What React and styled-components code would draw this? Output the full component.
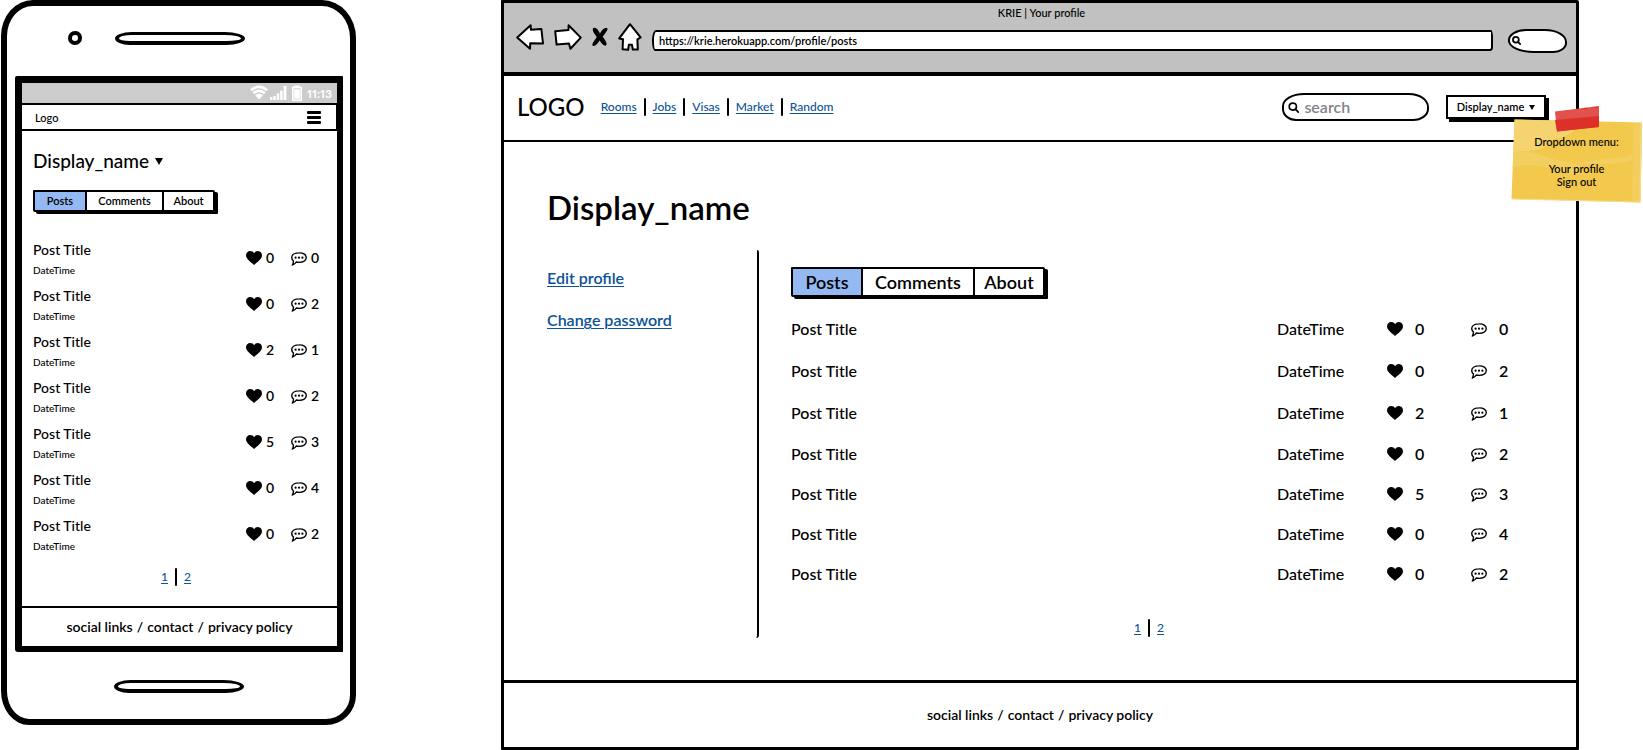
import React, { useState } from "react";
import styled, { createGlobalStyle, css } from "styled-components";

const INK = "#000";
const LINK = "#0b5299";

const GlobalStyle = createGlobalStyle`
  *, *::before, *::after { box-sizing: border-box; }
  body {
    margin: 0;
    background: #fff;
    color: ${INK};
    font-family: Lato, "Open Sans", sans-serif;
    font-weight: 500;
  }
  h1, h2, p, ul { margin: 0; padding: 0; font: inherit; }
  ul { list-style: none; }
  button, input { font: inherit; color: inherit; }
`;

const Page = styled.div`
  display: flex;
  align-items: flex-start;
  gap: 145px;
  padding: 0 64px 0 1px;
`;

const plainButton = css`
  border: 0;
  padding: 0;
  background: none;
  cursor: pointer;
`;

/* ---------- shared pieces ---------- */

const TabBar = styled.div`
  display: flex;
  width: max-content;
  height: ${(p) => (p.$small ? 22 : 30)}px;
  border: 2px solid ${INK};
  border-radius: 1px 2px 1px 2px;
  box-shadow: 3px 2px 0 ${INK};
`;

const Tab = styled.button`
  ${plainButton}
  width: ${(p) => p.$width}px;
  background: ${(p) => (p.$active ? "#94b9f2" : "#fff")};
  font-size: ${(p) => (p.$small ? 11 : 18)}px;
  line-height: 18px;
  font-weight: 600;
  & + & { border-left: 2px solid ${INK}; }
`;

const Pager = styled.nav`
  display: flex;
  justify-content: center;
  align-items: center;
  gap: 7px;
  height: 20px;
  padding-right: 3px;
`;

const Rule = styled.span`
  width: 2px;
  height: 18px;
  border-radius: 1px;
  background: ${INK};
`;

const TextLink = styled.a`
  color: ${LINK};
  font-size: ${(p) => (p.$large ? 16 : 12)}px;
  line-height: ${(p) => (p.$large ? 20 : 16)}px;
  font-weight: ${(p) => (p.$large ? 600 : 500)};
  text-decoration: underline;
  text-decoration-thickness: 1px;
  text-underline-offset: 2px;
`;

const FooterBar = styled.footer`
  display: flex;
  justify-content: center;
  align-items: center;
  gap: 4px;
  height: ${(p) => (p.$small ? 40 : 67)}px;
  border-top: ${(p) => (p.$small ? 2 : 3)}px solid ${INK};
  font-size: 14px;
  line-height: 20px;
  font-weight: 600;
`;

const FooterLink = styled.a`
  color: inherit;
  text-decoration: none;
`;

const Metric = styled.span`
  display: flex;
  align-items: center;
  gap: ${(p) => (p.$small ? 4 : 12)}px;
  font-size: ${(p) => (p.$small ? 14 : 16)}px;
  line-height: 20px;
  font-weight: 600;
`;

const Caret = styled.span`
  border: ${(p) => (p.$large ? 4 : 3)}px solid transparent;
  border-top: ${(p) => (p.$large ? 7 : 5)}px solid ${INK};
  border-bottom: 0;
`;

const HeartIcon = () => (
  <svg width="16" height="14" viewBox="0 0 16 14" aria-hidden="true">
    <path d="M8 14 C5.6 11.4 0.2 8.3 0 4.4 C0 1.6 2 0 4.1 0 C6 0 7.3 0.9 8.1 2.2 C9 0.8 10.4 0 12 0.1 C14.4 0.2 16 2 16 4.4 C15.9 8.4 10.5 11.2 8 14 Z" />
  </svg>
);

const BubbleIcon = () => (
  <svg width="16" height="16" viewBox="0 -2 16 16" fill="none" stroke={INK} strokeWidth="1.4" strokeLinejoin="round" aria-hidden="true">
    <path d="M8.2 0.9 C12.4 0.8 15.3 2.9 15.3 5.6 C15.2 8.6 12 10.4 8.3 10.4 C7.2 10.4 6.2 10.3 5.3 10 C4.4 11.6 2.9 12.7 1.3 13.1 C2 12.1 2.4 10.7 2.5 9 C1.3 8.2 0.7 7 0.7 5.6 C0.8 2.8 4 0.9 8.2 0.9 Z" />
    <g fill={INK} stroke="none">
      <circle cx="4.6" cy="5.7" r="1.1" />
      <circle cx="8" cy="5.7" r="1.1" />
      <circle cx="11.4" cy="5.7" r="1.1" />
    </g>
  </svg>
);

const SearchIcon = ({ size, weight }) => (
  <svg width={size} height={size} viewBox="0 0 12 12" fill="none" stroke={INK} strokeWidth={weight} strokeLinecap="round" aria-hidden="true">
    <path d="M5 1.3 C7.4 1.2 8.9 2.7 8.9 4.9 C8.9 7.1 7.3 8.7 5.1 8.7 C2.8 8.7 1.3 7.2 1.3 5 C1.3 2.7 2.8 1.4 5 1.3 Z M7.9 7.8 L10.8 10.8" />
  </svg>
);

/* ---------- phone ---------- */

const Phone = styled.section`
  flex: none;
  width: 355px;
  border: 6px solid ${INK};
  border-radius: 32px 34px 30px 28px / 36px 38px 30px 34px;
  padding: 25px 7px 26px 8px;
`;

const PhoneTop = styled.div`
  display: flex;
  align-items: center;
  gap: 33px;
  padding-left: 53px;
  margin-bottom: 31px;
`;

const Camera = styled.span`
  width: 14px;
  height: 14px;
  border: 4px solid ${INK};
  border-radius: 50% 46% 50% 48%;
`;

const Speaker = styled.span`
  display: block;
  width: 130px;
  height: 13px;
  border: 4px solid ${INK};
  border-top-width: 3px;
  border-radius: 18px 22px 20px 16px / 7px;
`;

const PhoneBottom = styled.div`
  display: flex;
  justify-content: center;
  padding-top: 28px;
`;

const Screen = styled.div`
  border: 7px solid ${INK};
  border-right-width: 6px;
  border-bottom-width: 6px;
  border-radius: 2px 1px 0 3px;
`;

const StatusBar = styled.div`
  display: flex;
  justify-content: flex-end;
  align-items: center;
  gap: 5px;
  height: 20px;
  padding-right: 5px;
  background: #ccc;
  color: #fff;
  font-size: 12px;
  font-weight: 700;
  font-variant-numeric: proportional-nums;
`;

const PhoneHeader = styled.header`
  display: flex;
  justify-content: space-between;
  align-items: center;
  height: 28px;
  padding: 0 15px 0 13px;
  border-top: 2px solid ${INK};
  border-bottom: 2px solid ${INK};
  border-right: 1px solid ${INK};
  font-size: 11px;
`;

const MenuButton = styled.button`
  ${plainButton}
  display: flex;
  flex-direction: column;
  gap: 2px;
  width: 14px;
  span { height: 3px; border-radius: 1px; background: ${INK}; }
`;

const PhoneMain = styled.main`
  padding: 18px 15px 19px 11px;
`;

const NameButton = styled.button`
  ${plainButton}
  display: flex;
  align-items: center;
  gap: 6px;
  margin-bottom: 17px;
  font-size: 19px;
  line-height: 24px;
`;

const PhoneList = styled.ul`
  margin: 27px 0 6px;
`;

const PhoneRow = styled.li`
  display: grid;
  grid-template-columns: 1fr 45px 31px;
  align-items: start;
  height: 46px;
  ${Metric} { height: 38px; }
`;

const PhoneTitle = styled.p`
  font-size: 14px;
  line-height: 22px;
`;

const PhoneDate = styled.p`
  font-size: 10px;
  line-height: 18px;
`;

/* ---------- browser ---------- */

const Browser = styled.section`
  position: relative;
  flex: 1;
  min-width: 0;
  border: 3px solid ${INK};
  border-radius: 1px 2px 1px 1px;
`;

const Chrome = styled.div`
  height: 73px;
  padding: 2px 9px 0 12px;
  border-bottom: 4px solid ${INK};
  background: #c1c1c1;
`;

const WindowTitle = styled.p`
  font-size: 11px;
  line-height: 16px;
  text-align: center;
`;

const ChromeRow = styled.div`
  display: flex;
  align-items: center;
  gap: 10px;
  height: 32px;
`;

const ChromeButton = styled.button`
  ${plainButton}
  display: flex;
`;

const ChromeFields = styled.div`
  display: flex;
  align-items: center;
  flex: 1;
  gap: 15px;
  padding-top: 7px;
`;

const AddressBar = styled.input`
  flex: 1;
  min-width: 0;
  height: 21px;
  padding: 0 5px;
  border: 2px solid ${INK};
  border-radius: 4px 2px 3px 3px / 10px 8px 4px 10px;
  background: #fff;
  font-size: 11px;
  line-height: 16px;
  font-weight: 600;
`;

const ChromeSearch = styled.label`
  display: flex;
  align-items: center;
  width: 59px;
  height: 24px;
  padding-left: 2px;
  border: 2px solid ${INK};
  border-radius: 18px 22px 14px 26px / 11px 13px 10px 12px;
  background: #fff;
`;

const BareInput = styled.input`
  width: 100%;
  min-width: 0;
  padding: 0;
  border: 0;
  outline: 0;
  background: none;
  font-size: 16px;
  line-height: 20px;
  font-weight: 600;
  &::placeholder { color: #83838b; opacity: 1; }
`;

const SiteHeader = styled.header`
  display: flex;
  align-items: center;
  height: 66px;
  padding: 0 30px 2px 13px;
  border-bottom: 2px solid ${INK};
`;

const Logo = styled.a`
  margin-right: 16px;
  color: inherit;
  font-size: 24px;
  line-height: 28px;
  text-decoration: none;
`;

const SiteNav = styled.nav`
  display: flex;
  align-items: center;
  gap: 7px;
`;

const SearchBox = styled.label`
  display: flex;
  align-items: center;
  gap: 5px;
  width: 147px;
  height: 28px;
  margin: 0 17px 0 auto;
  padding: 0 8px 0 4px;
  border: 2px solid ${INK};
  border-radius: 22px 20px 16px 14px / 13px 14px 12px 12px;
`;

const AccountButton = styled.button`
  ${plainButton}
  display: flex;
  justify-content: center;
  align-items: center;
  gap: 5px;
  width: 100px;
  height: 24px;
  border: 2px solid ${INK};
  box-shadow: 3px 3px 0 ${INK};
  font-size: 11px;
  line-height: 16px;
  font-weight: 600;
`;

const SiteMain = styled.main`
  padding: 47px 66px 42px 43px;
`;

const PageTitle = styled.h1`
  margin-bottom: 25px;
  font-size: 33px;
  line-height: 36px;
  font-weight: 600;
`;

const Columns = styled.div`
  display: grid;
  grid-template-columns: 212px 1fr;
  gap: 32px;
`;

const Sidebar = styled.nav`
  display: flex;
  flex-direction: column;
  align-items: flex-start;
  gap: 22px;
  padding-top: 18px;
  border-right: 2px solid ${INK};
  border-radius: 0 2px 3px 0;
`;

const Posts = styled.div`
  padding-top: 17px;
`;

const PostList = styled.ul`
  margin: 11px 0 24px;
`;

const PostRow = styled.li`
  display: grid;
  grid-template-columns: 1fr 110px 84px 39px;
  align-items: center;
  height: 40px;
  font-size: 16px;
  line-height: 20px;
  &:nth-child(-n + 3) { height: 42px; }
`;

const Note = styled.aside`
  position: absolute;
  top: 103px;
  right: -66px;
  width: 131px;
  height: 97px;
  padding-top: 29px;
  font-size: 11px;
  line-height: 13px;
  text-align: center;
  svg { position: absolute; top: 0; left: 0; }
  p { position: relative; }
  p + p { margin-top: 14px; }
`;

const NotePaper = () => (
  <svg width="131" height="97" viewBox="0 0 131 97" aria-hidden="true">
    <path d="M3.5 13.5 L131 16.5 L129.5 96.5 L0.5 93 Z" fill="#f2c94c" />
    <path d="M3.5 13.5 L72 15 C66 24 58 30 44 33 C34 36 38 42 24 44 C16 46 10 44 2.4 47 Z" fill="#f4d370" />
    <path d="M2.4 47 C16 42 30 50 46 54 C60 55 76 62 74 67 C56 72 42 62 28 60 C18 59 10 58 1.8 62 Z" fill="#f3cf60" />
    <path d="M66 57 C90 52 108 54 121 48 L121 54 C106 58 88 60 66 57 Z" fill="#f3cf60" />
    <path d="M122 17 L131 17 L129.5 96 L121 94 Z" fill="#f3ce5c" />
    <path d="M130 17 L129 96 L1 93" fill="none" stroke="#f7dd8c" />
    <path d="M44 5.5 L88 0 L88 21 L46 25.5 Z" fill="#e0524b" />
    <path d="M44 14 L88 10 L88 21 L46 25.5 Z" fill="#dd3028" />
    <path d="M70 3 L77 1.6 L75 3.6 Z M81 1.4 L87 0.8 L86 2.2 Z" fill="#d7332c" />
  </svg>
);

const ArrowIcon = ({ flip }) => (
  <svg width="28" height="26" viewBox="0 0 28 26" fill="#fff" stroke={INK} strokeWidth="2" strokeLinejoin="round" aria-hidden="true">
    {flip ? (
      <path d="M1.2 7.2 L14.5 6 L14.6 1.2 L26.8 13.6 L16.4 24.8 L15 19.6 L2.6 20.6 Z" />
    ) : (
      <path d="M1.2 13.6 L14.6 1.2 L15 5.8 L25.4 5 L27 19.6 L14.2 19.2 L14 24.8 Z" />
    )}
  </svg>
);

const StopIcon = () => (
  <svg width="16" height="20" viewBox="0 0 16 20" aria-hidden="true">
    <path d="M1.2 1.2 C3.4 -0.4 6 2 8 6.6 C9.6 3 12.6 0 15.2 1.2 C16.6 2.4 13 6.6 10.6 9.8 C12.8 12.6 15.4 15.8 14.4 17.8 C13.2 20 10.2 17.6 7.6 13.6 C5.6 17 2.4 20.4 0.6 18.6 C-0.6 17 2.6 13.4 4.8 10 C2.4 7.2 -0.4 3 1.2 1.2 Z" />
  </svg>
);

const HomeIcon = () => (
  <svg width="24" height="28" viewBox="0 0 24 28" fill="#fff" stroke={INK} strokeWidth="2" strokeLinejoin="round" aria-hidden="true">
    <path d="M12 1.2 L22.6 14.4 L19.4 16.4 L19.8 26.6 L14.8 26.6 L14 21.8 L10.8 21.8 L10.2 26.8 L4.6 26.2 L5 16.2 L1.2 15.4 Z" />
  </svg>
);

const StatusIcons = () => (
  <svg width="52" height="16" viewBox="0 0 52 16" fill="none" aria-hidden="true">
    <g stroke="#fff" strokeWidth="2.7">
      <path d="M1 5.4 C5.6 0.8 12.6 0.8 17 5.4" />
      <path d="M3.4 8.3 C6.6 5 11.6 5 14.7 8.3" />
    </g>
    <g fill="#fff">
      <path d="M5.2 10.2 C7.4 8.2 10.8 8.2 13 10.2 L9 14.6 Z" />
      <path d="M20 12 H22.4 V15 H20 Z M23.3 11 H25.8 V15 H23.3 Z M26.8 8.6 H29.2 V15 H26.8 Z M30.2 5.6 H32.6 V15 H30.2 Z M33.6 1 H36.4 V15 H33.6 Z" />
      <path d="M44.5 0.6 H49.4 V2 H44.5 Z M44.2 4.2 H49.8 V13.8 H44.2 Z" />
    </g>
    <path d="M42.8 2.4 H51.2 V15.4 H42.8 Z" stroke="#fff" strokeWidth="1.6" strokeLinejoin="round" />
  </svg>
);

/* ---------- data ---------- */

const posts = [
  { likes: 0, comments: 0 },
  { likes: 0, comments: 2 },
  { likes: 2, comments: 1 },
  { likes: 0, comments: 2 },
  { likes: 5, comments: 3 },
  { likes: 0, comments: 4 },
  { likes: 0, comments: 2 },
];

const sections = ["Rooms", "Jobs", "Visas", "Market", "Random"];
const tabNames = ["Posts", "Comments", "About"];

function Tabs({ small, widths }) {
  const [active, setActive] = useState("Posts");
  return (
    <TabBar $small={small} role="tablist">
      {tabNames.map((name, i) => (
        <Tab
          key={name}
          type="button"
          role="tab"
          aria-selected={active === name}
          $active={active === name}
          $small={small}
          $width={widths[i]}
          onClick={() => setActive(name)}
        >
          {name}
        </Tab>
      ))}
    </TabBar>
  );
}

function PostMetrics({ post, small }) {
  return (
    <>
      <Metric $small={small}><HeartIcon />{post.likes}</Metric>
      <Metric $small={small}><BubbleIcon />{post.comments}</Metric>
    </>
  );
}

function Pagination() {
  return (
    <Pager aria-label="Pages">
      <TextLink href="#1">1</TextLink>
      <Rule />
      <TextLink href="#2">2</TextLink>
    </Pager>
  );
}

function Footer({ small }) {
  return (
    <FooterBar $small={small}>
      <FooterLink href="#social">social links</FooterLink>
      <span>/</span>
      <FooterLink href="#contact">contact</FooterLink>
      <span>/</span>
      <FooterLink href="#privacy">privacy policy</FooterLink>
    </FooterBar>
  );
}

function PhoneMockup() {
  return (
    <Phone>
      <PhoneTop><Camera /><Speaker /></PhoneTop>
      <Screen>
        <StatusBar><StatusIcons />11:13</StatusBar>
        <PhoneHeader>
          Logo
          <MenuButton type="button" aria-label="Menu"><span /><span /><span /></MenuButton>
        </PhoneHeader>
        <PhoneMain>
          <NameButton type="button" aria-haspopup="menu">Display_name<Caret $large /></NameButton>
          <Tabs small widths={[50, 77, 51]} />
          <PhoneList>
            {posts.map((post, i) => (
              <PhoneRow key={i}>
                <div>
                  <PhoneTitle>Post Title</PhoneTitle>
                  <PhoneDate>DateTime</PhoneDate>
                </div>
                <PostMetrics post={post} small />
              </PhoneRow>
            ))}
          </PhoneList>
          <Pagination />
        </PhoneMain>
        <Footer small />
      </Screen>
      <PhoneBottom><Speaker /></PhoneBottom>
    </Phone>
  );
}

function BrowserMockup() {
  return (
    <Browser>
      <Chrome>
        <WindowTitle>KRIE | Your profile</WindowTitle>
        <ChromeRow>
          <ChromeButton type="button" aria-label="Back"><ArrowIcon /></ChromeButton>
          <ChromeButton type="button" aria-label="Forward"><ArrowIcon flip /></ChromeButton>
          <ChromeButton type="button" aria-label="Stop"><StopIcon /></ChromeButton>
          <ChromeButton type="button" aria-label="Home"><HomeIcon /></ChromeButton>
          <ChromeFields>
            <AddressBar aria-label="Address" defaultValue="https://krie.herokuapp.com/profile/posts" />
            <ChromeSearch>
              <SearchIcon size={11} weight={2.4} />
              <BareInput aria-label="Web search" />
            </ChromeSearch>
          </ChromeFields>
        </ChromeRow>
      </Chrome>
      <SiteHeader>
        <Logo href="#home">LOGO</Logo>
        <SiteNav>
          {sections.map((name, i) => (
            <React.Fragment key={name}>
              {i > 0 && <Rule />}
              <TextLink href={`#${name}`}>{name}</TextLink>
            </React.Fragment>
          ))}
        </SiteNav>
        <SearchBox>
          <SearchIcon size={13} weight={1.8} />
          <BareInput type="text" placeholder="search" aria-label="Search" />
        </SearchBox>
        <AccountButton type="button" aria-haspopup="menu">Display_name<Caret /></AccountButton>
      </SiteHeader>
      <SiteMain>
        <PageTitle>Display_name</PageTitle>
        <Columns>
          <Sidebar>
            <TextLink $large href="#edit">Edit profile</TextLink>
            <TextLink $large href="#password">Change password</TextLink>
          </Sidebar>
          <Posts>
            <Tabs widths={[68, 112, 70]} />
            <PostList>
              {posts.map((post, i) => (
                <PostRow key={i}>
                  <span>Post Title</span>
                  <span>DateTime</span>
                  <PostMetrics post={post} />
                </PostRow>
              ))}
            </PostList>
            <Pagination />
          </Posts>
        </Columns>
      </SiteMain>
      <Footer />
      <Note>
        <NotePaper />
        <p>Dropdown menu:</p>
        <p>Your profile<br />Sign out</p>
      </Note>
    </Browser>
  );
}

export default function App() {
  return (
    <>
      <GlobalStyle />
      <Page>
        <PhoneMockup />
        <BrowserMockup />
      </Page>
    </>
  );
}
